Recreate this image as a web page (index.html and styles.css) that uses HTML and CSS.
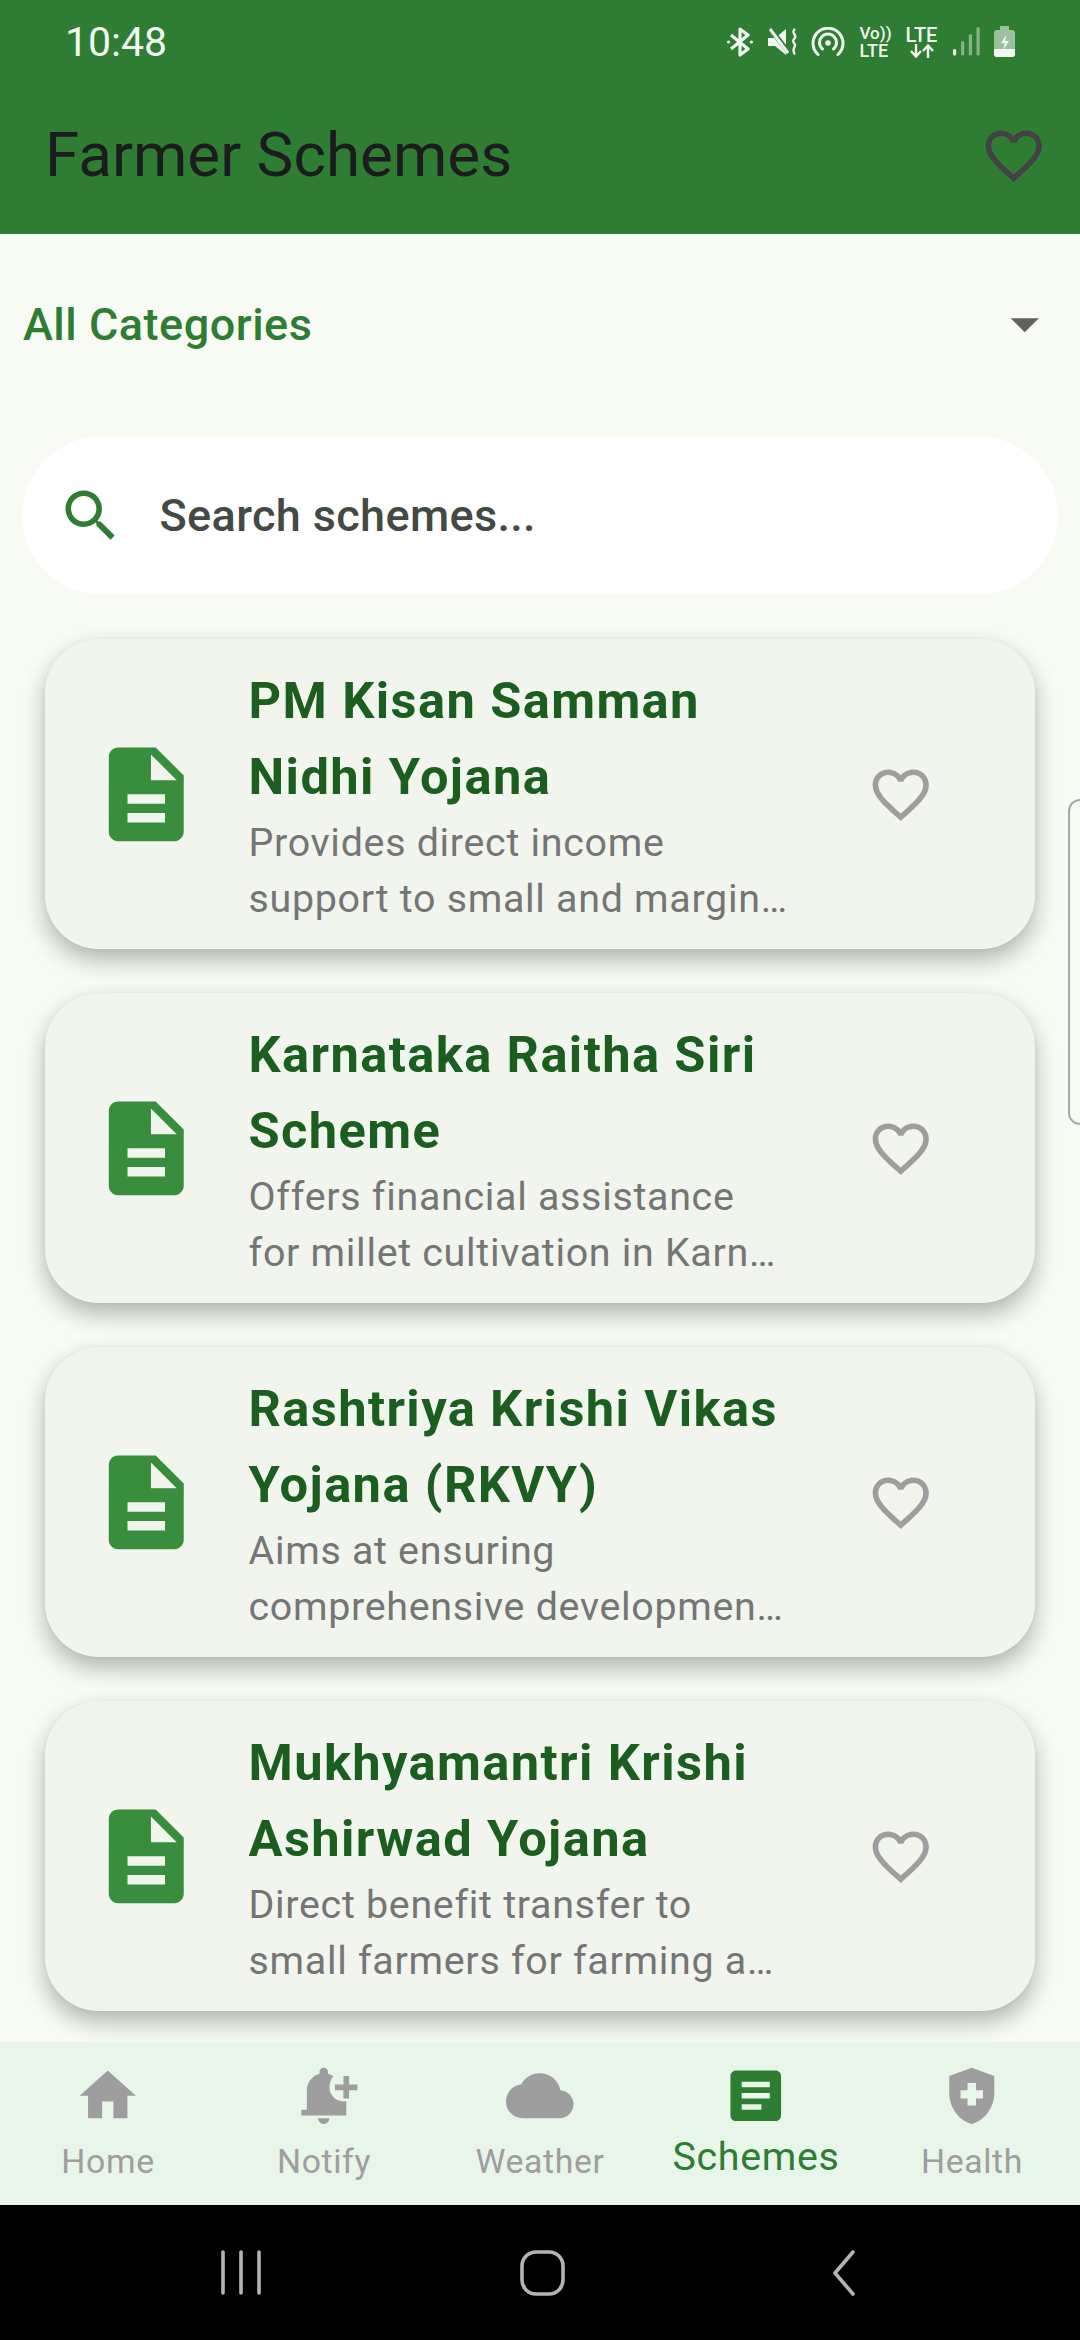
FILE: index.html
```html
<!DOCTYPE html>
<html>
<head>
    <meta charset="utf-8" />
    <title>Farmer Schemes</title>
    <link rel="stylesheet" href="styles.css">
</head>
<body>
    <svg class="defs" width="0" height="0">
        <symbol id="heart" viewBox="0 0 24 24"><path d="M16.5 3c-1.74 0-3.41.81-4.5 2.09C10.91 3.81 9.24 3 7.5 3 4.42 3 2 5.42 2 8.5c0 3.78 3.4 6.86 8.55 11.54L12 21.35l1.45-1.32C18.6 15.36 22 12.28 22 8.5 22 5.42 19.58 3 16.5 3zm-4.4 15.55l-.1.1-.1-.1C7.14 14.24 4 11.39 4 8.5 4 6.5 5.5 5 7.5 5c1.54 0 3.04.99 3.57 2.36h1.87C13.46 5.99 14.96 5 16.5 5c2 0 3.5 1.5 3.5 3.5 0 2.89-3.14 5.74-7.9 10.05z"/></symbol>
        <symbol id="doc" viewBox="0 0 24 24"><path d="M14 2H6c-1.1 0-1.99.9-1.99 2L4 20c0 1.1.89 2 1.99 2H18c1.1 0 2-.9 2-2V8l-6-6zm2 16H8v-2h8v2zm0-4H8v-2h8v2zm-3-5V3.5L18.5 9H13z"/></symbol>
    </svg>

    <div class="top">
        <div class="status">
            <span class="time">10:48</span>
            <div class="status-icons">
                <svg class="si" width="26" height="30" viewBox="0 0 26 30"><path d="M4 8l17 14-8 6V2l8 6L4 22" fill="none" stroke="#f1f6f1" stroke-width="3.2" stroke-linejoin="round"/><circle cx="1.6" cy="15" r="1.6" fill="#f1f6f1"/><circle cx="24.4" cy="15" r="1.6" fill="#f1f6f1"/></svg>
                <svg class="si" width="29" height="28" viewBox="0 0 29 28"><path d="M0 10h7l11-9v26L7 18H0z" fill="#f1f6f1"/><path d="M1-1l21 27" stroke="#2e7d32" stroke-width="5"/><path d="M2 1l18 24" stroke="#f1f6f1" stroke-width="3"/><path d="M27 1c-5 4 3 6-.5 9.500-3 3-.5 4 .5 6s-4 5 0 10" fill="none" stroke="#f1f6f1" stroke-width="2.400"/></svg>
                <svg class="si" width="34" height="30" viewBox="0 0 34 30"><path d="M7 27.500a15 15 0 1 1 20 0M11.500 22a8.500 8.500 0 1 1 11 0" fill="none" stroke="#f1f6f1" stroke-width="3" stroke-linecap="round"/><circle cx="17" cy="16" r="2.800" fill="#f1f6f1"/></svg>
                <div class="volte"><span class="vo">Vo))</span><span>LTE</span></div>
                <div class="lte">
                    <span>LTE</span>
                    <svg width="26" height="14" viewBox="0 0 26 14"><path d="M7 0v12M2 7l5 5.500L12 7M19 14V2M14 7l5-5.500L24 7" fill="none" stroke="#f1f6f1" stroke-width="2.400"/></svg>
                </div>
                <svg class="si" width="27" height="29" viewBox="0 0 27 29"><rect x="0" y="22" width="3.200" height="6.500" rx="1.500" fill="#f1f6f1"/><rect x="8" y="14" width="3.200" height="14.500" rx="1.500" fill="#86b388"/><rect x="15.800" y="7" width="3.200" height="21.500" rx="1.500" fill="#86b388"/><rect x="23.500" y="0" width="3.200" height="28.500" rx="1.500" fill="#86b388"/></svg>
                <svg class="si" width="21" height="31" viewBox="0 0 21 31"><path d="M6 0h9v4h3a3 3 0 0 1 3 3v21a3 3 0 0 1-3 3H3a3 3 0 0 1-3-3V7a3 3 0 0 1 3-3h3z" fill="#9cc19e"/><path d="M0 23h21v5a3 3 0 0 1-3 3H3a3 3 0 0 1-3-3z" fill="#f1f6f1"/><path d="M12.500 9l-5.500 8h4l-2 7 6-9h-4z" fill="#fff"/></svg>
            </div>
        </div>
        <div class="appbar">
            <h1 class="appbar-title">Farmer Schemes</h1>
            <svg class="appbar-heart"><use href="#heart"/></svg>
        </div>
    </div>

    <div class="content">
        <div class="dropdown">
            <span>All Categories</span>
            <svg class="drop-arrow" viewBox="0 0 24 24"><path d="M7 10l5 5 5-5z"/></svg>
        </div>

        <div class="search">
            <svg class="search-icon" viewBox="0 0 24 24"><path d="M15.500 14h-.79l-.28-.27C15.410 12.590 16 11.110 16 9.500 16 5.910 13.090 3 9.500 3S3 5.910 3 9.500 5.910 16 9.500 16c1.610 0 3.090-.59 4.230-1.570l.27.28v.79l5 4.990L20.490 19l-4.990-5zm-6 0C7.010 14 5 11.990 5 9.500S7.010 5 9.500 5 14 7.010 14 9.500 11.990 14 9.500 14z"/></svg>
            <span>Search schemes...</span>
        </div>

        <div class="list">
            <div class="card">
                <svg class="card-doc"><use href="#doc"/></svg>
                <div class="card-text">
                    <div class="card-title">PM Kisan Samman Nidhi Yojana</div>
                    <div class="card-sub">Provides direct income<br>support to small and margin…</div>
                </div>
                <svg class="card-heart"><use href="#heart"/></svg>
            </div>
            <div class="card">
                <svg class="card-doc"><use href="#doc"/></svg>
                <div class="card-text">
                    <div class="card-title">Karnataka Raitha Siri Scheme</div>
                    <div class="card-sub">Offers financial assistance<br>for millet cultivation in Karn…</div>
                </div>
                <svg class="card-heart"><use href="#heart"/></svg>
            </div>
            <div class="card">
                <svg class="card-doc"><use href="#doc"/></svg>
                <div class="card-text">
                    <div class="card-title">Rashtriya Krishi Vikas Yojana (RKVY)</div>
                    <div class="card-sub">Aims at ensuring<br>comprehensive developmen…</div>
                </div>
                <svg class="card-heart"><use href="#heart"/></svg>
            </div>
            <div class="card">
                <svg class="card-doc"><use href="#doc"/></svg>
                <div class="card-text">
                    <div class="card-title">Mukhyamantri Krishi Ashirwad Yojana</div>
                    <div class="card-sub">Direct benefit transfer to<br>small farmers for farming a…</div>
                </div>
                <svg class="card-heart"><use href="#heart"/></svg>
            </div>
        </div>

        <div class="edge-handle"></div>
    </div>

    <div class="tabs">
        <div class="tab">
            <svg class="tab-icon" viewBox="0 0 24 24"><path d="M10 20v-6h4v6h5v-8h3L12 3 2 12h3v8z"/></svg>
            <span class="tab-label">Home</span>
        </div>
        <div class="tab">
            <svg class="tab-icon" viewBox="0 0 24 24"><path d="M10 20h4c0 1.100-.9 2-2 2s-2-.9-2-2zm4-11c0 2.760 2.240 5 5 5 .34 0 .68-.03 1-.1V19H4v-2h2v-7c0-2.790 1.910-5.140 4.500-5.800v-.7c0-.83.67-1.500 1.500-1.500s1.500.67 1.500 1.500v.7c.71.18 1.360.49 1.940.9C14.560 6.130 14 7.500 14 9zm10-1h-3V5h-2v3h-3v2h3v3h2v-3h3V8z"/></svg>
            <span class="tab-label">Notify</span>
        </div>
        <div class="tab">
            <svg class="tab-icon" viewBox="0 0 24 24"><path d="M19.350 10.040C18.670 6.590 15.640 4 12 4 9.110 4 6.600 5.640 5.350 8.040 2.340 8.360 0 10.910 0 14c0 3.310 2.690 6 6 6h13c2.760 0 5-2.240 5-5 0-2.640-2.050-4.780-4.650-4.960z"/></svg>
            <span class="tab-label">Weather</span>
        </div>
        <div class="tab active">
            <svg class="tab-icon" viewBox="0 0 24 24"><path d="M19 3H5c-1.100 0-2 .9-2 2v14c0 1.100.9 2 2 2h14c1.100 0 2-.9 2-2V5c0-1.100-.9-2-2-2zm-5 14H7v-2h7v2zm3-4H7v-2h10v2zm0-4H7V7h10v2z"/></svg>
            <span class="tab-label">Schemes</span>
        </div>
        <div class="tab">
            <svg class="tab-icon" viewBox="0 0 24 24"><path d="M10.500 13H8v-3h2.500V7.500h3V10H16v3h-2.500v2.500h-3V13zM12 2 4 5v6.090c0 5.050 3.410 9.760 8 10.910 4.590-1.150 8-5.860 8-10.910V5l-8-3z"/></svg>
            <span class="tab-label">Health</span>
        </div>
    </div>

    <div class="sysnav">
        <svg width="60" height="46" viewBox="0 0 60 46"><path d="M12 2v41M30 2v41M48 2v41" stroke="#b4b4b4" stroke-width="3.600" stroke-linecap="round"/></svg>
        <svg width="60" height="46" viewBox="0 0 60 46"><rect x="9" y="2" width="41" height="42" rx="14" fill="none" stroke="#b4b4b4" stroke-width="3.600"/></svg>
        <svg width="60" height="46" viewBox="0 0 60 46"><path d="M38 2L20 23l18 21" fill="none" stroke="#b4b4b4" stroke-width="3.600" stroke-linecap="round" stroke-linejoin="round"/></svg>
    </div>
</body>
</html>
```

FILE: styles.css
```css
* {
    box-sizing: border-box;
}

html, body {
    margin: 0;
    padding: 0;
}

body {
    width: 1080px;
    height: 2340px;
    display: flex;
    flex-direction: column;
    overflow: hidden;
    background: #f7fbf3;
    font-family: Roboto, "Liberation Sans", sans-serif;
}

.defs {
    position: absolute;
}

/* top green part */
.top {
    height: 234px;
    background: #2e7d32;
    flex-shrink: 0;
}

.status {
    height: 77px;
    padding: 6px 65px 0 65px;
    display: flex;
    align-items: center;
    justify-content: space-between;
}

.time {
    font-size: 41px;
    color: #f4f8f4;
}

.status-icons {
    display: flex;
    align-items: center;
    gap: 14.500px;
    color: #f1f6f1;
    font-weight: 500;
}

.si {
    display: block;
}

.volte {
    display: flex;
    flex-direction: column;
    font-size: 18px;
    line-height: 17px;
    width: 31px;
}

.vo {
    font-size: 17px;
}

.lte {
    display: flex;
    flex-direction: column;
    align-items: center;
    font-size: 20px;
    line-height: 18px;
    width: 33px;
}

.appbar {
    height: 157px;
    padding: 0 33px 0 45px;
    display: flex;
    align-items: center;
    justify-content: space-between;
}

.appbar-title {
    margin: 0 0 3px;
    font-size: 62px;
    font-weight: 400;
    color: #1c1b1f;
}

.appbar-heart {
    width: 67.500px;
    height: 67.500px;
    fill: #424242;
}

/* main part */
.content {
    position: relative;
    flex: 1;
    min-height: 0;
    overflow: hidden;
}

.dropdown {
    height: 180px;
    padding: 0 30px 0 23px;
    display: flex;
    align-items: center;
    justify-content: space-between;
    font-size: 45px;
    font-weight: 500;
    letter-spacing: 0.500px;
    color: #2e7d32;
}

.drop-arrow {
    width: 67.500px;
    height: 67.500px;
    fill: #616161;
    margin-right: -8px;
}

.search {
    margin: 23px 22px 0;
    height: 157px;
    border-radius: 78px;
    background: #fff;
    padding-left: 35px;
    display: flex;
    align-items: center;
    gap: 35px;
    font-size: 45px;
    font-weight: 500;
    letter-spacing: 0.350px;
    color: #424a43;
}

.search-icon {
    width: 67.500px;
    height: 67.500px;
    fill: #2e7d32;
}

.list {
    padding: 45px 45px 0;
    display: flex;
    flex-direction: column;
    gap: 44px;
}

.card {
    height: 310px;
    flex-shrink: 0;
    border-radius: 54px;
    background: #f1f5ed;
    box-shadow: 0 11px 22px rgba(30, 40, 30, 0.32), 0 0 4px rgba(40, 50, 40, 0.04);
    padding: 1px 0 0 45px;
    display: flex;
    align-items: center;
}

.card-doc {
    width: 112.500px;
    height: 112.500px;
    fill: #388e3c;
    flex-shrink: 0;
}

.card-text {
    width: 540px;
    margin-left: 46px;
    margin-right: 78px;
    flex-shrink: 0;
}

.card-title {
    font-size: 50.600px;
    line-height: 76px;
    font-weight: 700;
    letter-spacing: 1.400px;
    color: #1b5e20;
}

.card-sub {
    font-size: 39.400px;
    line-height: 56px;
    letter-spacing: 0.700px;
    color: #757575;
}

.card-heart {
    width: 67.500px;
    height: 67.500px;
    fill: #9e9e9e;
    flex-shrink: 0;
}

.edge-handle {
    position: absolute;
    left: 1068px;
    top: 565px;
    width: 30px;
    height: 326px;
    border: 2.500px solid #a8aaa6;
    border-radius: 12px;
}

/* bottom tabs */
.tabs {
    position: relative;
    height: 163px;
    flex-shrink: 0;
    background: #e8f5e9;
    display: grid;
    grid-template-columns: repeat(5, 1fr);
    padding-top: 19.600px;
}

.tab {
    display: flex;
    flex-direction: column;
    align-items: center;
    color: #9e9e9e;
    fill: #9e9e9e;
}

.tab-icon {
    width: 67.500px;
    height: 67.500px;
    flex-shrink: 0;
}

.tab-label {
    margin-top: 10px;
    font-size: 33.750px;
    line-height: 46px;
    letter-spacing: 0.650px;
}

.tab.active {
    color: #2e7d32;
    fill: #2e7d32;
}

.tab.active .tab-label {
    margin-top: 5px;
    font-size: 39.400px;
}

.sysnav {
    height: 135px;
    flex-shrink: 0;
    background: #000;
    display: flex;
    align-items: center;
    gap: 242px;
    padding-left: 211px;
}
```
